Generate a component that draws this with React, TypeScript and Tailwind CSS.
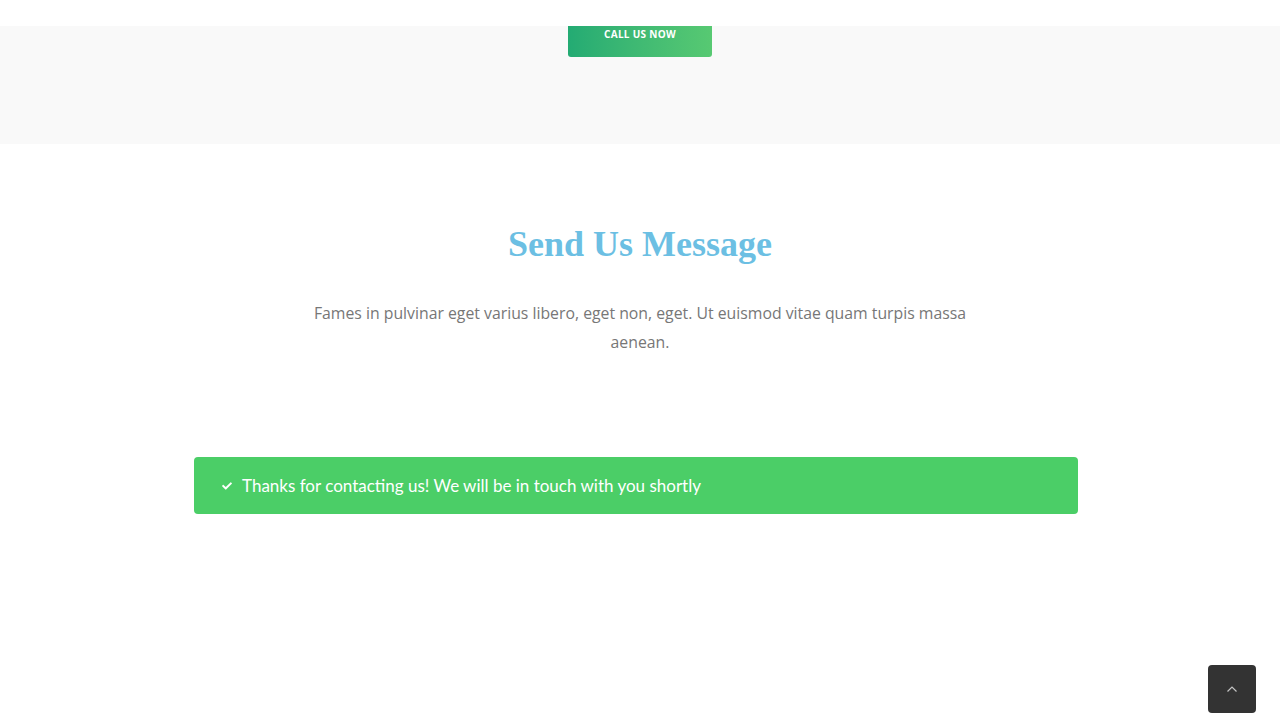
import { FaCheck } from "react-icons/fa"

export default function App() {
	return (
		<div className="relative min-h-[720px] bg-white font-['Lato','Open_Sans',sans-serif]">
			{/* header strip */}
			<div className="h-[26px] bg-white"></div>

			{/* call to action band */}
			<div className="h-[118px] bg-[#f9f9f9] overflow-hidden flex justify-center">
				<button className="-mt-[14px] h-[45px] w-[144px] rounded-[3px] bg-gradient-to-r from-[#23ab73] to-[#57c972] text-white text-[10px] font-bold tracking-[0.3px] font-['Open_Sans',sans-serif] flex items-center justify-center">
					CALL US NOW
				</button>
			</div>

			{/* message section */}
			<section className="flex flex-col items-center pt-[78px]">
				<h2 className="text-[#6cbfe3] text-[36px] font-bold font-['Liberation_Serif','DejaVu_Serif',serif] leading-[44px]">
					Send Us Message
				</h2>
				<p className="mt-[33px] w-[670px] text-center text-[#777777] text-[15.8px] leading-[29px] font-['Open_Sans',sans-serif]">
					Fames in pulvinar eget varius libero, eget non, eget. Ut euismod vitae quam turpis massa aenean.
				</p>

				<div className="mt-[100px] mr-[8px] w-[884px] h-[57px] rounded-[4px] bg-[#4bce67] flex items-center pl-[28px] text-white text-[17px]">
					<FaCheck className="w-[10px] h-[10px] mr-[10px]" />
					<span>Thanks for contacting us! We will be in touch with you shortly</span>
				</div>
			</section>

			{/* back to top */}
			<button className="fixed right-[24px] bottom-[7px] w-[48px] h-[48px] rounded-[4px] bg-[#333333] flex items-center justify-center">
				<svg width="14" height="14" viewBox="0 0 14 14" fill="none">
					<path d="M2.5 9.5 L7 5 L11.5 9.5" stroke="#c4c4c4" strokeWidth="1.2" />
				</svg>
			</button>
		</div>
	)
}
